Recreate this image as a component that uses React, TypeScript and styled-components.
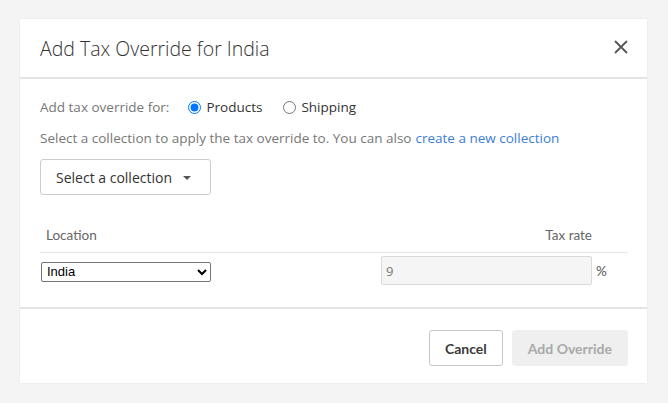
import { FC } from 'react';
import styled, { createGlobalStyle } from 'styled-components';

const GlobalStyle = createGlobalStyle`
  html, body {
    margin: 0;
    padding: 0;
    background: #f4f4f4;
    font-family: 'Open Sans', 'Noto Sans', sans-serif;
  }
`;

const Page = styled.div`
  width: 668px;
  height: 403px;
  padding: 19px 21px 20px 20px;
  box-sizing: border-box;
`;

const Modal = styled.div`
  background: #fff;
  height: 364px;
  display: flex;
  flex-direction: column;
  box-shadow: 0 0 1px rgba(0, 0, 0, 0.15);
`;

const Header = styled.div`
  height: 58px;
  display: flex;
  align-items: center;
  justify-content: space-between;
  padding: 0 19px 0 20px;
  border-bottom: 2px solid #e3e3e3;
`;

const Title = styled.h2`
  margin: 0;
  font-size: 19.5px;
  font-weight: 300;
  color: #333;
  padding-top: 1px;
`;

const Close = styled.button`
  border: 0;
  background: none;
  padding: 0;
  width: 14px;
  height: 14px;
  margin-top: -2px;
  cursor: pointer;
  svg {
    display: block;
  }
`;

const Body = styled.div`
  flex: 1;
  padding: 18px 19px 0 20px;
  border-bottom: 2px solid #e3e3e3;
`;

const Line = styled.div`
  display: flex;
  align-items: center;
  font-size: 13.5px;
  color: #777;
  height: 20px;
  margin-bottom: 11px;
  white-space: nowrap;
`;

const Radio = styled.label`
  display: flex;
  align-items: center;
  color: #333;
  margin-left: 14px;
  input {
    margin: 0 5px 0 5px;
    width: 13px;
    height: 13px;
  }
  & + & {
    margin-left: 16px;
  }
`;

const Link = styled.a`
  color: #3d7ed8;
  text-decoration: none;
  margin-left: 4px;
`;

const Dropdown = styled.button`
  display: flex;
  align-items: center;
  gap: 11px;
  height: 36px;
  width: 171px;
  padding: 0 0 0 15px;
  margin-top: 9px;
  background: #fff;
  border: 1px solid #ccc;
  border-radius: 3px;
  font-family: 'Open Sans', sans-serif;
  font-size: 14px;
  color: #333;
`;

const Caret = styled.span`
  width: 0;
  height: 0;
  border-left: 4px solid transparent;
  border-right: 4px solid transparent;
  border-top: 4px solid #555;
  margin-top: 1px;
`;

const Table = styled.div`
  margin-top: 22px;
`;

const HeadRow = styled.div`
  display: grid;
  grid-template-columns: 1fr 36px;
  height: 35px;
  align-items: center;
  border-bottom: 1px solid #e6e6e6;
  font-family: 'Lato', sans-serif;
  font-size: 13.5px;
  color: #666;
`;

const HeadCell = styled.div`
  display: flex;
  justify-content: space-between;
  padding-left: 6px;
`;

const Row = styled.div`
  display: grid;
  grid-template-columns: 1fr 211px 36px;
  align-items: center;
  padding-top: 3px;
`;

const NativeSelect = styled.select`
  width: 170px;
  height: 20px;
  font-family: 'Liberation Sans', Arial, sans-serif;
  font-size: 13px;
  color: #000;
  border: 1px solid #767676;
  border-radius: 2px;
  background: #fff;
  padding: 0 0 0 1px;
  margin-left: 1px;
`;

const RateInput = styled.input`
  box-sizing: border-box;
  width: 211px;
  height: 29px;
  border: 1px solid #dadada;
  border-radius: 2px;
  background: #f5f5f5;
  padding: 0 4px;
  font-family: 'Open Sans', sans-serif;
  font-size: 13px;
  color: #777;
`;

const Unit = styled.span`
  font-family: 'Lato', sans-serif;
  font-size: 13.5px;
  color: #555;
  padding-left: 4px;
`;

const Footer = styled.div`
  display: flex;
  justify-content: flex-end;
  gap: 9px;
  padding: 21px 19px 0 0;
  height: 74px;
  box-sizing: border-box;
`;

const Button = styled.button<{ $disabled?: boolean }>`
  height: 36px;
  padding: 0 15px;
  border-radius: 3px;
  font-family: 'Lato', sans-serif;
  font-weight: 700;
  font-size: 14px;
  border: 1px solid ${(p) => (p.$disabled ? '#efefef' : '#c8c8c8')};
  background: ${(p) => (p.$disabled ? '#efefef' : '#fff')};
  color: ${(p) => (p.$disabled ? '#a9a9a9' : '#3a3a3a')};
`;

const App: FC = () => (
  <Page>
    <GlobalStyle />
    <Modal>
      <Header>
        <Title>Add Tax Override for India</Title>
        <Close aria-label="Close">
          <svg width="14" height="14" viewBox="0 0 14 14">
            <path d="M1 1 L13 13 M13 1 L1 13" stroke="#555" strokeWidth="1.8" />
          </svg>
        </Close>
      </Header>
      <Body>
        <Line>
          Add tax override for:
          <Radio>
            <input type="radio" name="for" defaultChecked />
            Products
          </Radio>
          <Radio>
            <input type="radio" name="for" />
            Shipping
          </Radio>
        </Line>
        <Line>
          Select a collection to apply the tax override to. You can also
          <Link href="#">create a new collection</Link>
        </Line>
        <Dropdown>
          Select a collection
          <Caret />
        </Dropdown>
        <Table>
          <HeadRow>
            <HeadCell>
              <span>Location</span>
              <span>Tax rate</span>
            </HeadCell>
            <div />
          </HeadRow>
          <Row>
            <div>
              <NativeSelect defaultValue="India">
                <option>India</option>
              </NativeSelect>
            </div>
            <RateInput defaultValue="9" disabled />
            <Unit>%</Unit>
          </Row>
        </Table>
      </Body>
      <Footer>
        <Button>Cancel</Button>
        <Button $disabled>Add Override</Button>
      </Footer>
    </Modal>
  </Page>
);

export default App;
